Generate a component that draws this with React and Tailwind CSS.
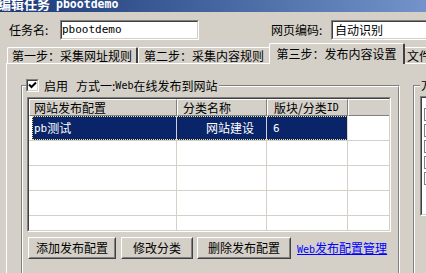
import React from "react";

const Mono = ({ children, className = "" }) => (
  <span className={`font-['DejaVu_Sans_Mono',monospace] text-[10px] ${className}`}>{children}</span>
);

const Sunken = ({ className = "", children }) => (
  <div className={`shrink-0 border border-t-[#808080] border-l-[#808080] border-b-white border-r-white ${className}`}>
    <div className="h-full border border-t-[#404040] border-l-[#404040] border-b-[#d4d0c8] border-r-[#d4d0c8] bg-white">
      {children}
    </div>
  </div>
);

const Etched = ({ className = "", children }) => (
  <div className={`relative shrink-0 border border-t-[#808080] border-l-[#808080] border-b-white border-r-white ${className}`}>
    <div className="h-full border border-t-white border-l-white border-b-[#808080] border-r-[#808080]">
      {children}
    </div>
  </div>
);

const Button = ({ className = "", children }) => (
  <div className={`shrink-0 h-[22px] border border-t-white border-l-white border-b-[#404040] border-r-[#404040] ${className}`}>
    <div className="h-full flex items-center justify-center border border-t-[#d4d0c8] border-l-[#d4d0c8] border-b-[#808080] border-r-[#808080] leading-none">
      {children}
    </div>
  </div>
);

const CheckBox = ({ checked }) => (
  <Sunken className="w-[13px] h-[13px]">
    {checked && (
      <svg width="9" height="9" viewBox="0 0 9 9" className="block">
        <path d="M1 3.5 L3.5 6 L8 1.5" stroke="#000" strokeWidth="2" fill="none" />
      </svg>
    )}
  </Sunken>
);

const Tab = ({ selected, className = "", children }) => (
  <div
    className={`shrink-0 flex items-center justify-center rounded-t-[2px] border-t border-l border-white border-r-2 border-r-[#404040] ${
      selected ? "relative z-10 h-[21px] -mb-px bg-[#d4d0c8]" : "h-[16px]"
    } ${className}`}
  >
    <span className="leading-none whitespace-nowrap">{children}</span>
  </div>
);

const rows = [
  { name: "pb", nameZh: "测试", cat: "网站建设", id: "6", selected: true },
  {},
  {},
  {},
  {},
];

export default function App() {
  return (
    <div className="w-[426px] h-[273px] overflow-hidden bg-[#d4d0c8] text-[12px] text-black font-['Noto_Sans_CJK_SC',sans-serif]">
      {/* title bar */}
      <div className="h-[12px] overflow-hidden bg-gradient-to-r from-[#1b3977] to-[#7393ca]">
        <div className="-mt-[4px] -ml-[2px] flex items-center gap-[6px] text-white font-bold text-[13px] leading-[16px] whitespace-nowrap">
          <span>编辑任务</span>
          <span className="font-['DejaVu_Sans_Mono',monospace] text-[11.5px]">pbootdemo</span>
        </div>
      </div>

      {/* name / encoding */}
      <div className="mt-[8px] h-[20px] flex items-center pl-[9px] whitespace-nowrap">
        <span className="shrink-0 w-[51px] leading-none">任务名:</span>
        <Sunken className="w-[139px] h-[20px]">
          <div className="h-full flex items-center">
            <Mono className="text-[11px]">pbootdemo</Mono>
          </div>
        </Sunken>
        <span className="shrink-0 ml-[72px] w-[60px] leading-none">网页编码:</span>
        <Sunken className="w-[120px] h-[20px]">
          <div className="h-full flex items-center pl-[2px] leading-none">自动识别</div>
        </Sunken>
      </div>

      {/* tabs */}
      <div className="mt-[3px] h-[20px] flex items-end pl-[7px]">
        <Tab className="w-[131px]">第一步：采集网址规则</Tab>
        <Tab className="w-[133px]">第二步：采集内容规则</Tab>
        <Tab selected className="w-[136px] -ml-[2px]">第三步：发布内容设置</Tab>
        <Tab className="w-[60px] -ml-[2px] justify-start pl-[3px]">文件</Tab>
      </div>

      {/* tab panel */}
      <div className="ml-[6px] h-[220px] border-t border-l border-white flex">
        {/* group 1 */}
        <Etched className="ml-[14px] mt-[21px] w-[379px] h-[200px]">
          <div className="absolute left-[4px] -top-[7px] flex items-center bg-[#d4d0c8] pr-[2px] whitespace-nowrap leading-none">
            <CheckBox checked />
            <span className="ml-[5px]">启用</span>
            <span className="ml-[8px]">方式一:</span>
            <Mono>Web</Mono>
            <span>在线发布到网站</span>
          </div>

          {/* list view */}
          <Sunken className="ml-[4px] mt-[10px] w-[364px] h-[135px]">
            <div className="h-full flex flex-col overflow-hidden">
              <div className="h-[17px] flex shrink-0 bg-[#d4d0c8] leading-none">
                <div className="w-[148px] flex items-center pl-[4px] border-t border-l border-white border-r border-b border-r-[#808080] border-b-[#808080]">网站发布配置</div>
                <div className="w-[90px] flex items-center pl-[5px] border-t border-l border-white border-r border-b border-r-[#808080] border-b-[#808080]">分类名称</div>
                <div className="w-[81px] flex items-center pl-[6px] border-t border-l border-white border-r border-b border-r-[#808080] border-b-[#808080]">
                  版块/分类<Mono>ID</Mono>
                </div>
                <div className="flex-1 border-t border-l border-white border-b border-b-[#808080]" />
              </div>
              {rows.map((r, i) => (
                <div key={i} className="h-[25px] shrink-0 flex border-b border-[#d4d0c8] leading-none">
                  <div className="w-[3px] shrink-0" />
                  <div
                    className={`flex ${
                      r.selected ? "bg-[#0a246a] text-white outline-1 outline-dotted outline-[#f0e68c] -outline-offset-1" : ""
                    }`}
                  >
                    <div className="w-[145px] flex items-center pl-[2px] border-r border-[#d4d0c8]">
                      {r.name && <Mono className="text-[11px]">{r.name}</Mono>}
                      {r.nameZh}
                    </div>
                    <div className="w-[90px] flex items-center justify-end pr-[12px] border-r border-[#d4d0c8]">{r.cat}</div>
                    <div className="w-[81px] flex items-center pl-[6px] border-r border-[#d4d0c8]">
                      {r.id && <Mono className="text-[11px]">{r.id}</Mono>}
                    </div>
                  </div>
                  <div className="flex-1" />
                </div>
              ))}
            </div>
          </Sunken>

          {/* buttons */}
          <div className="ml-[5px] mt-[5px] flex items-center whitespace-nowrap">
            <Button className="w-[88px]">添加发布配置</Button>
            <Button className="ml-[5px] w-[72px]">修改分类</Button>
            <Button className="ml-[4px] w-[94px]">删除发布配置</Button>
            <a className="ml-[6px] text-[#0000ff] underline leading-none">
              <Mono className="text-[10px]">Web</Mono>发布配置管理
            </a>
          </div>
        </Etched>

        {/* group 2 */}
        <Etched className="ml-[13px] mt-[21px] w-[100px] h-[200px]">
          <div className="absolute left-[6px] -top-[7px] bg-[#d4d0c8] px-[1px] leading-none whitespace-nowrap">方式二</div>
          <Sunken className="ml-[5px] mt-[9px] w-[80px] h-[120px]">
            <div className="flex flex-col pl-[2px] pt-[10px] gap-[3px]">
              {[0, 1, 2, 3, 4].map((k) => (
                <div key={k} className="w-[13px] h-[13px] border border-[#808080] bg-white" />
              ))}
            </div>
          </Sunken>
        </Etched>
      </div>
    </div>
  );
}
